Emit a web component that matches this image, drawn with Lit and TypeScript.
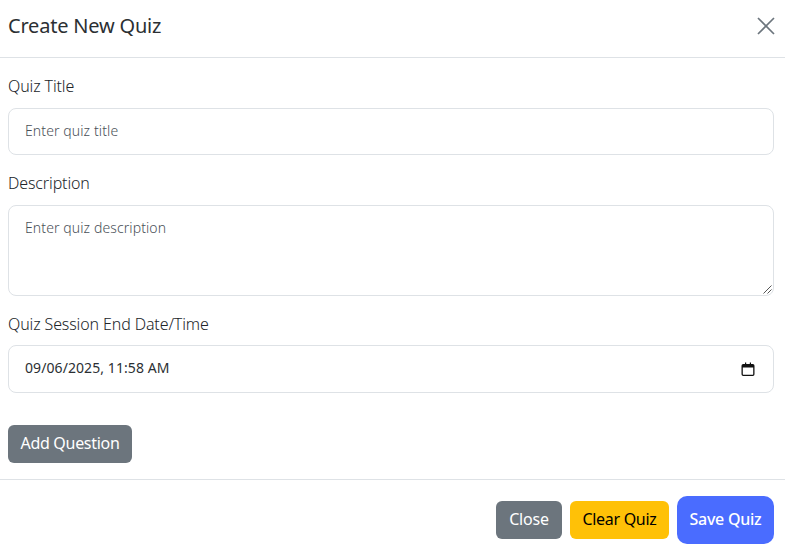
import { LitElement, html, css } from "lit";
import { customElement } from "lit/decorators.js";

@customElement("app-root")
export class AppRoot extends LitElement {
  static styles = css`
    :host { display: block; width: 785px; height: 556px; background: #fff; color: #212529; font-family: "Noto Sans", "Open Sans", sans-serif; font-size: 16px; font-weight: 300; overflow: hidden; }
    * { box-sizing: border-box; }
    .head { display: flex; justify-content: space-between; align-items: center; height: 58px; padding: 0 10px 5px 8px; border-bottom: 1px solid #dee2e6; }
    .title { font-size: 20px; line-height: 30px; font-weight: 400; letter-spacing: -0.2px; color: #2b2f33; }
    .x { width: 18px; height: 18px; display: block; }
    .body { padding: 16px 11px 16px 8px; display: flex; flex-direction: column; }
    label { display: block; line-height: 24px; margin-bottom: 10px; letter-spacing: -0.12px; }
    label.tight { margin-bottom: 9px; }
    .field { width: 100%; height: 47px; padding: 0 16px 2px; border: 1px solid #dee2e6; border-radius: 8px; font-size: 14px; letter-spacing: 0.1px; color: #495057; display: flex; align-items: center; margin-bottom: 16px; }
    .area { height: 91px; align-items: flex-start; padding-top: 12px; position: relative; }
    .grip { position: absolute; right: 1px; bottom: 1px; width: 10px; height: 10px; }
    .date { height: 48px; color: #2b2f33; font-weight: 400; letter-spacing: 0.08px; justify-content: space-between; margin-bottom: 32px; padding-bottom: 3px; }
    .cal { width: 14px; height: 14px; display: block; margin: 3px 2px 0 0; }
    .btn { border: 0; border-radius: 6px; font: inherit; font-weight: 400; display: inline-flex; align-items: center; justify-content: center; padding: 0 0 2px; }
    .add { background: #6c757d; color: #fff; width: 124px; height: 38px; letter-spacing: -0.3px; }
    .foot { border-top: 1px solid #dee2e6; display: flex; justify-content: flex-end; align-items: center; gap: 8px; padding: 16px 11px 0 0; }
    .close { background: #6c757d; color: #fff; width: 66px; height: 38px; letter-spacing: -0.2px; }
    .clear { background: #ffc107; color: #000; width: 99px; height: 38px; letter-spacing: -0.3px; }
    .save { background: #4a6cff; color: #fff; font-weight: 500; width: 97px; height: 48px; border-radius: 10px; letter-spacing: -0.25px; }
  `;
  render() {
    return html`
      <div class="head">
        <div class="title">Create New Quiz</div>
        <svg class="x" viewBox="0 0 18 18"><path d="M1 1 17 17M17 1 1 17" stroke="#6c757d" stroke-width="1.7" fill="none"/></svg>
      </div>
      <div class="body">
        <label>Quiz Title</label>
        <div class="field">Enter quiz title</div>
        <label>Description</label>
        <div class="field area">Enter quiz description
          <svg class="grip" viewBox="0 0 10 10"><path d="M9.5 1.5 1.5 9.5M9.5 5.5 5.5 9.5" stroke="#555" stroke-width="1" fill="none"/></svg>
        </div>
        <label class="tight">Quiz Session End Date/Time</label>
        <div class="field date">09/06/2025, 11:58 AM
          <svg class="cal" viewBox="0 0 14 14"><path d="M4 .5V2H2.2A1.7 1.7 0 0 0 .5 3.7v8.6A1.7 1.7 0 0 0 2.2 14h9.6a1.7 1.7 0 0 0 1.7-1.7V3.7A1.7 1.7 0 0 0 11.8 2H10V.5H8.8V2H5.2V.5H4ZM1.8 5.5h10.4v6.8a.4.4 0 0 1-.4.4H2.2a.4.4 0 0 1-.4-.4V5.5Z" fill="#111"/></svg>
        </div>
        <div><button class="btn add">Add Question</button></div>
      </div>
      <div class="foot">
        <button class="btn close">Close</button>
        <button class="btn clear">Clear Quiz</button>
        <button class="btn save">Save Quiz</button>
      </div>
    `;
  }
}
